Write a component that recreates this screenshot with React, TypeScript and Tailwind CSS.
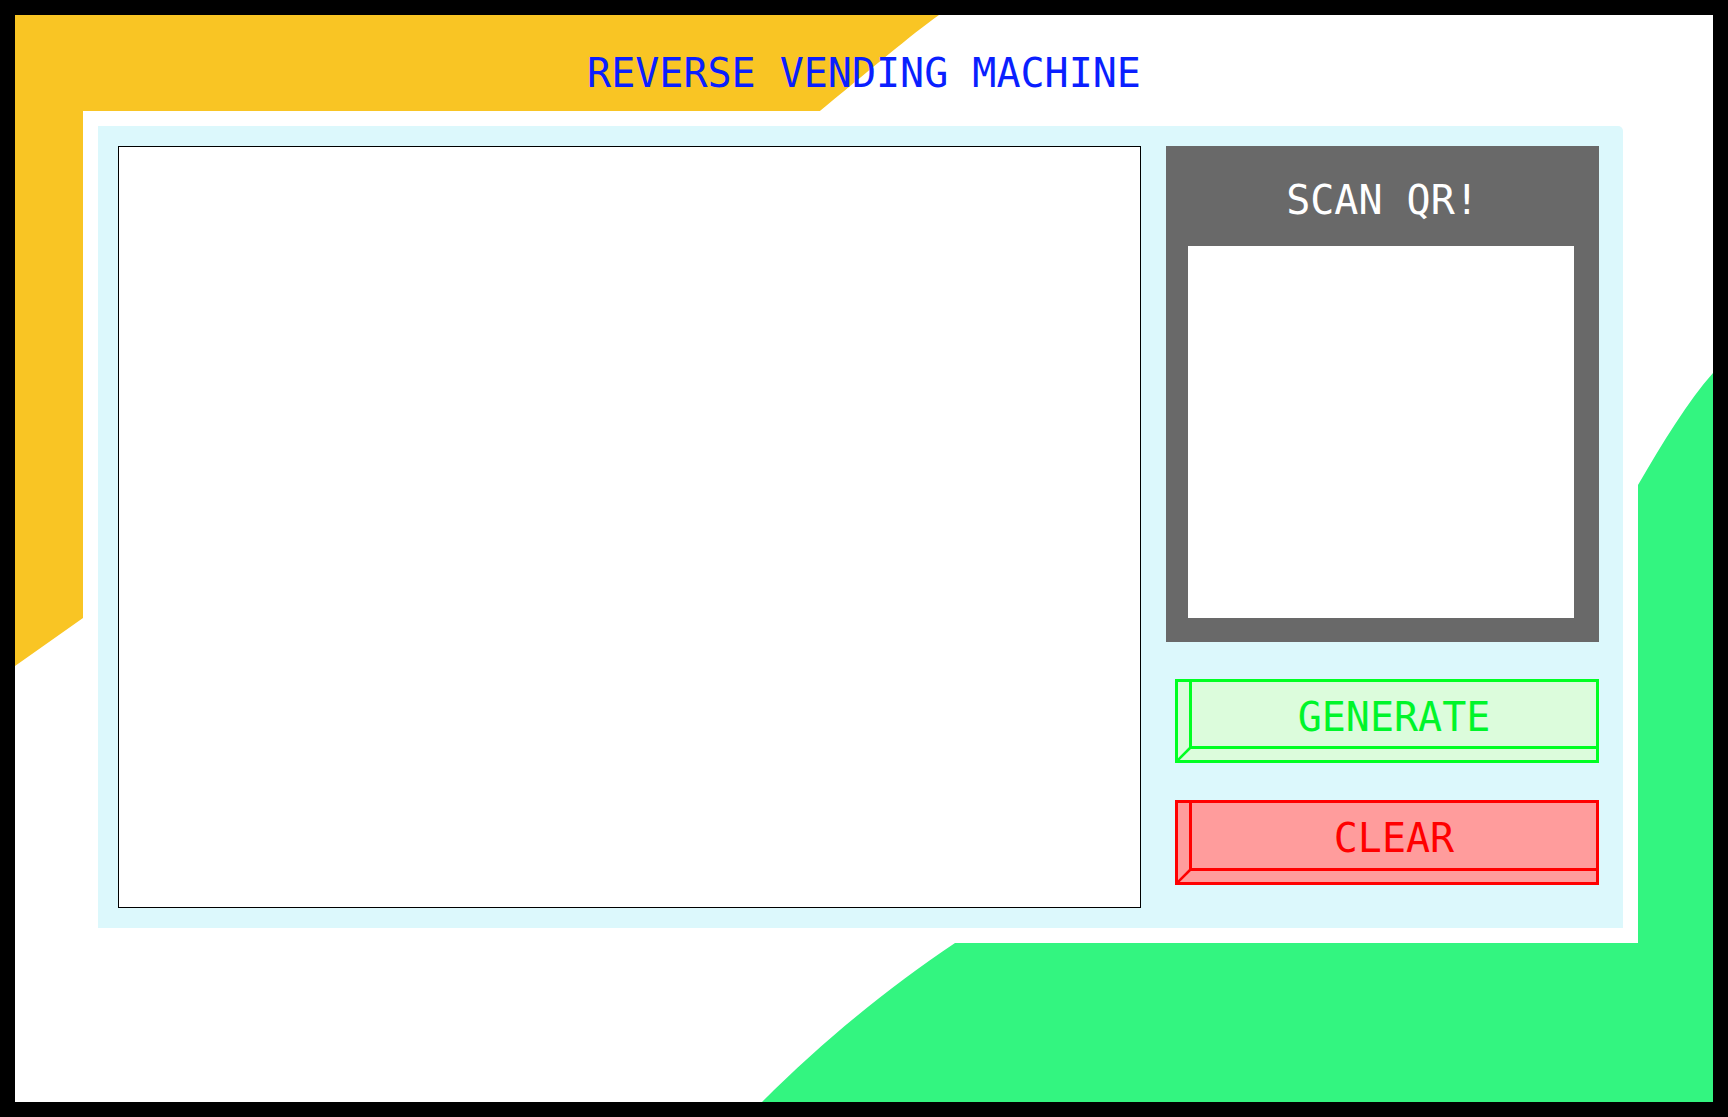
import React from "react";

function BevelButton({ label, tone }: { label: string; tone: "green" | "red" }) {
  const isGreen = tone === "green";
  return (
    <button
      className={`relative ml-[9px] block w-[424px] border-[3px] ${
        isGreen ? "h-[84px] border-[#00ff22] bg-[#dcfcdc] text-[#00f52a]" : "h-[85px] border-[#ff0000] bg-[#ff9c9c] text-[#ff0000]"
      }`}
    >
      <div
        className={`absolute left-[11px] top-0 right-0 bottom-[11px] flex items-center justify-center border-l-[3px] border-b-[3px] pt-[5px] ${
          isGreen ? "border-[#00ff22]" : "border-[#ff0000]"
        }`}
      >
        <span className="text-[40px] leading-[46px]">{label}</span>
      </div>
      <svg className="absolute left-0 bottom-0" width="13" height="13" viewBox="0 0 13 13">
        <line x1="0" y1="13" x2="12" y2="1" stroke={isGreen ? "#00ff22" : "#ff0000"} strokeWidth="2.5" />
      </svg>
    </button>
  );
}

export default function App() {
  return (
    <div className="relative h-[1117px] w-full overflow-hidden border-[15px] border-black bg-white font-['DejaVu_Sans_Mono',monospace]">
      {/* background blobs */}
      <svg className="absolute left-0 top-0" width="1698" height="1087" viewBox="15 15 1698 1087">
        <path d="M15 15 H939 C912 34 870 70 815 115 L83 618 L15 666 Z" fill="#f9c524" />
        <path
          d="M762 1102 C826 1038 891 986 955 943 C1155 809 1538 658 1638 485 C1663 442 1688 401 1713 373 L1713 1102 Z"
          fill="#33f580"
        />
      </svg>

      <div className="relative flex flex-col items-center">
        <h1 className="pt-[35px] text-[40px] leading-[46px] text-[#0a1fff]">REVERSE VENDING MACHINE</h1>

        <div className="mt-[15px] ml-[68px] h-[832px] w-[1555px] self-start bg-white p-[15px]">
          <div className="flex h-full w-full gap-[25px] rounded-tr-[5px] bg-[#dcf8fc] pt-[20px] pr-[24px] pb-[20px] pl-[20px]">
            <div className="h-[762px] w-[1023px] border border-black bg-white" />

            <div className="flex w-[433px] flex-col">
              <div className="flex h-[496px] flex-col bg-[#696969] pt-[31px]">
                <h2 className="text-center text-[40px] leading-[46px] text-white">SCAN QR!</h2>
                <div className="mt-[23px] ml-[22px] h-[372px] w-[386px] bg-white" />
              </div>

              <div className="mt-[37px]">
                <BevelButton label="GENERATE" tone="green" />
              </div>
              <div className="mt-[37px]">
                <BevelButton label="CLEAR" tone="red" />
              </div>
            </div>
          </div>
        </div>
      </div>
    </div>
  );
}
